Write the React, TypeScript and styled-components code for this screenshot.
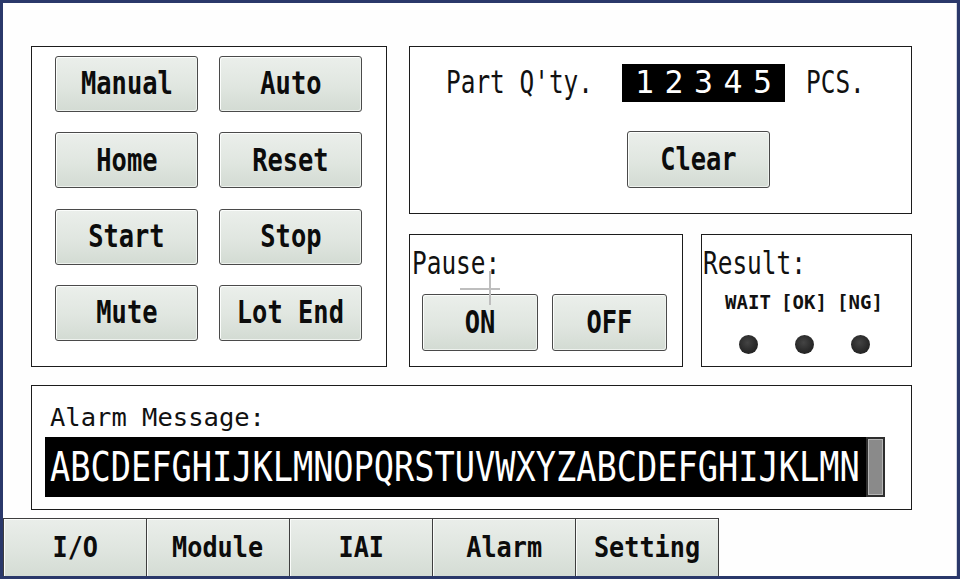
import React from "react";
import styled, { createGlobalStyle, css } from "styled-components";

const GlobalStyle = createGlobalStyle`
  html, body {
    margin: 0;
    padding: 0;
    background: #ffffff;
    overflow: hidden;
  }
  body {
    font-family: "DejaVu Sans Mono", "Liberation Mono", monospace;
    color: #111111;
  }
  *, *::before, *::after {
    box-sizing: border-box;
  }
`;

const Screen = styled.div`
  position: relative;
  width: 960px;
  height: 579px;
  border: 3px solid #2a386a;
  background: #fefefe;
  box-shadow: inset -1px 0 0 #d3d6de;
  display: flex;
  flex-direction: column;
  padding-top: 43px;
  overflow: hidden;
`;

const Workspace = styled.div`
  display: grid;
  grid-template-columns: 356px 503px;
  column-gap: 22px;
  height: 321px;
  margin-left: 28px;
`;

const Panel = styled.section`
  position: relative;
  border: 1px solid #1c1c1c;
  background: #ffffff;
`;

const CommandPanel = styled(Panel)`
  display: grid;
  grid-template-columns: repeat(2, 143px);
  grid-auto-rows: 56px;
  gap: 20.33px 21px;
  align-content: start;
  padding: 9px 0 0 23px;
`;

const RightColumn = styled.div`
  display: grid;
  grid-template-rows: 168px 1fr;
  row-gap: 20px;
`;

const QtyPanel = styled(Panel)`
  display: grid;
  grid-template-columns: 176px 163px auto;
  grid-template-rows: 38px 57px;
  row-gap: 29px;
  align-content: start;
  align-items: center;
  padding: 17px 0 0 36px;
`;

const StatusRow = styled.div`
  display: grid;
  grid-template-columns: 274px 211px;
  column-gap: 18px;
`;

const PausePanel = styled(Panel)`
  display: flex;
  flex-direction: column;
  padding: 13px 0 0 2px;
`;

const ResultPanel = styled(Panel)`
  display: flex;
  flex-direction: column;
  padding: 13px 0 0 1px;
`;

const squeeze = css<{ $sx: number; $origin?: string }>`
  display: inline-block;
  white-space: pre;
  line-height: 1;
  transform: scaleX(${(p) => p.$sx});
  transform-origin: ${(p) => p.$origin ?? "center"};
`;

const Caption = styled.span<{ $sx: number; $origin?: string }>`
  ${squeeze};
  font-size: 31.5px;
  font-weight: 400;
  color: #111111;
`;

const ButtonLabel = styled.span<{ $sx: number; $origin?: string }>`
  ${squeeze};
  font-size: 31.5px;
  font-weight: 700;
`;

const TabLabel = styled.span<{ $sx: number; $origin?: string }>`
  ${squeeze};
  font-size: 28px;
  font-weight: 700;
`;

const HmiButton = styled.button<{ $w?: number; $h?: number }>`
  width: ${(p) => p.$w ?? 143}px;
  height: ${(p) => p.$h ?? 56}px;
  padding: 0;
  display: flex;
  align-items: center;
  justify-content: center;
  font-family: inherit;
  color: #0c0c0c;
  border: 1px solid #4a4a4a;
  border-radius: 3px;
  background: linear-gradient(180deg, #ebefeb 0%, #e0e6e0 55%, #d3dbd3 100%);
  box-shadow: inset 1px 1px 0 #fbfdfb, inset -1px -1px 0 #eef2ee;
  cursor: pointer;
`;

const ClearButton = styled(HmiButton)`
  grid-column: 2;
  grid-row: 2;
  justify-self: start;
  margin-left: 5px;
`;

const CaptionCell = styled.div<{ $pad?: number }>`
  display: flex;
  align-items: center;
  padding-left: ${(p) => p.$pad ?? 0}px;
`;

const NumberBox = styled.div`
  height: 38px;
  background: #000000;
  color: #ffffff;
  display: flex;
  align-items: center;
  justify-content: center;
  padding-left: 10.5px;
  font-size: 31.5px;
  line-height: 1;
  letter-spacing: 10.5px;
`;

const ToggleRow = styled.div`
  display: flex;
  gap: 14px;
  margin-top: 14.5px;
  padding-left: 10px;
`;

const LampGrid = styled.div`
  display: grid;
  grid-template-columns: repeat(3, 56px);
  justify-items: center;
  row-gap: 23px;
  margin-top: 13px;
  padding-left: 17px;
`;

const LampLabel = styled.span`
  font-size: 19px;
  font-weight: 700;
  line-height: 19px;
  white-space: pre;
  color: #111111;
`;

const Lamp = styled.span`
  width: 19px;
  height: 19px;
  border-radius: 50%;
  background: radial-gradient(circle at 45% 40%, #444444 0%, #2a2a2a 55%, #1b1b1b 100%);
`;

const AlarmPanel = styled(Panel)`
  width: 881px;
  height: 125px;
  margin: 18px 0 0 28px;
  padding: 19px 0 0 13px;
`;

const AlarmCaption = styled.div`
  padding-left: 5px;
  font-size: 25.5px;
  line-height: 25.5px;
  white-space: pre;
`;

const AlarmBar = styled.div`
  display: flex;
  width: 840px;
  height: 60px;
  margin-top: 6.5px;
`;

const AlarmText = styled.div`
  flex: 1;
  display: flex;
  align-items: center;
  background: #000000;
  color: #ffffff;
  overflow: hidden;
  padding-left: 5px;
`;

const BarText = styled.span<{ $sx: number; $origin?: string }>`
  ${squeeze};
  font-size: 41px;
  font-weight: 400;
`;

const ScrollThumb = styled.div`
  width: 19px;
  height: 60px;
  background: #8a8a8a;
  border: 2px solid #2e2e2e;
  box-shadow: inset 0 0 0 1px #b4b4b4;
`;

const TabBar = styled.nav`
  display: flex;
  height: 58px;
  margin-top: 8px;
`;

const Tab = styled.button`
  width: 144px;
  height: 58px;
  padding: 0;
  display: flex;
  align-items: center;
  justify-content: center;
  font-family: inherit;
  color: #0c0c0c;
  border: 1px solid #3e3e3e;
  border-bottom: none;
  background: linear-gradient(180deg, #eaeeea 0%, #dfe5df 55%, #d4dcd4 100%);
  box-shadow: inset 1px 1px 0 #fafcfa;
  cursor: pointer;
  & + & {
    margin-left: -1px;
  }
`;

const Crosshair = styled.svg`
  position: absolute;
  left: 50px;
  top: 36px;
  width: 41px;
  height: 35px;
  pointer-events: none;
`;

const commands = ["Manual", "Auto", "Home", "Reset", "Start", "Stop", "Mute", "Lot End"];
const lamps = ["WAIT", "[OK]", "[NG]"];
const tabs = ["I/O", "Module", "IAI", "Alarm", "Setting"];

export default function App() {
  return (
    <>
      <GlobalStyle />
      <Screen>
        <Workspace>
          <CommandPanel>
            {commands.map((c) => (
              <HmiButton key={c}>
                <ButtonLabel $sx={0.807}>{c}</ButtonLabel>
              </HmiButton>
            ))}
          </CommandPanel>

          <RightColumn>
            <QtyPanel>
              <CaptionCell>
                <Caption $sx={0.775} $origin="left">Part Q'ty.</Caption>
              </CaptionCell>
              <NumberBox>12345</NumberBox>
              <CaptionCell $pad={20.5}>
                <Caption $sx={0.775} $origin="left">PCS.</Caption>
              </CaptionCell>
              <ClearButton $h={57}>
                <ButtonLabel $sx={0.807}>Clear</ButtonLabel>
              </ClearButton>
            </QtyPanel>

            <StatusRow>
              <PausePanel>
                <Caption $sx={0.775} $origin="left">Pause:</Caption>
                <ToggleRow>
                  <HmiButton $w={116} $h={57}>
                    <ButtonLabel $sx={0.807}>ON</ButtonLabel>
                  </HmiButton>
                  <HmiButton $w={115} $h={57}>
                    <ButtonLabel $sx={0.807}>OFF</ButtonLabel>
                  </HmiButton>
                </ToggleRow>
                <Crosshair viewBox="0 0 41 35">
                  <line x1="30" y1="0" x2="30" y2="34" stroke="#bebebe" strokeWidth="2" />
                  <line x1="0" y1="18" x2="40" y2="18" stroke="#bebebe" strokeWidth="2" />
                </Crosshair>
              </PausePanel>

              <ResultPanel>
                <Caption $sx={0.775} $origin="left">Result:</Caption>
                <LampGrid>
                  {lamps.map((l) => (
                    <LampLabel key={l}>{l}</LampLabel>
                  ))}
                  {lamps.map((l) => (
                    <Lamp key={`lamp-${l}`} />
                  ))}
                </LampGrid>
              </ResultPanel>
            </StatusRow>
          </RightColumn>
        </Workspace>

        <AlarmPanel>
          <AlarmCaption>Alarm Message:</AlarmCaption>
          <AlarmBar>
            <AlarmText>
              <BarText $sx={0.82} $origin="left">ABCDEFGHIJKLMNOPQRSTUVWXYZABCDEFGHIJKLMN</BarText>
            </AlarmText>
            <ScrollThumb />
          </AlarmBar>
        </AlarmPanel>

        <TabBar>
          {tabs.map((t) => (
            <Tab key={t}>
              <TabLabel $sx={0.9}>{t}</TabLabel>
            </Tab>
          ))}
        </TabBar>
      </Screen>
    </>
  );
}
